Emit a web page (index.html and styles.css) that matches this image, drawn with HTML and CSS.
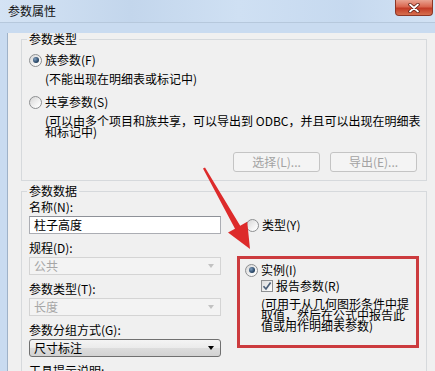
FILE: index.html
```html
<!DOCTYPE html>
<html lang="zh-CN">
<head>
<meta charset="utf-8">
<title>参数属性</title>
<link rel="stylesheet" href="styles.css">
</head>
<body>
<div class="window">
  <div class="titlebar">
    <span class="title">参数属性</span>
    <div class="close">
      <svg width="14" height="10" viewBox="0 0 14 10"><path d="M3 1.5 L11 8.5 M11 1.5 L3 8.5" stroke="#5a1c12" stroke-width="3.4" stroke-linecap="round"/><path d="M3 1.5 L11 8.5 M11 1.5 L3 8.5" stroke="#ffffff" stroke-width="1.8" stroke-linecap="round"/></svg>
    </div>
  </div>
  <div class="client">
    <fieldset class="group g1">
      <legend>参数类型</legend>
      <div class="opt first"><span class="radio on"></span>族参数(F)</div>
      <div class="note n1">(不能出现在明细表或标记中)</div>
      <div class="opt o2"><span class="radio"></span>共享参数(S)</div>
      <div class="note n2">(可以由多个项目和族共享，可以导出到 ODBC，并且可以出现在明细表<br>和标记中)</div>
      <div class="buttons">
        <button class="btn" disabled>选择(L)...</button>
        <button class="btn" disabled>导出(E)...</button>
      </div>
    </fieldset>
    <fieldset class="group g2">
      <legend>参数数据</legend>
      <div class="cols">
        <div class="left">
          <div class="lbl first">名称(N):</div>
          <div class="field input">柱子高度</div>
          <div class="lbl">规程(D):</div>
          <div class="field select disabled">公共<span class="tri"></span></div>
          <div class="lbl">参数类型(T):</div>
          <div class="field select disabled">长度<span class="tri"></span></div>
          <div class="lbl">参数分组方式(G):</div>
          <div class="field select active">尺寸标注<span class="tri"></span></div>
          <div class="lbl">工具提示说明:</div>
        </div>
        <div class="right">
          <div class="opt type"><span class="radio"></span>类型(Y)</div>
          <div class="redbox">
            <div class="opt"><span class="radio on"></span>实例(I)</div>
            <div class="opt chk"><span class="check"><svg width="10" height="10" viewBox="0 0 10 10"><path d="M1.5 5.2 L4 8 L8.6 1.6" fill="none" stroke="#4b5f78" stroke-width="1.7"/></svg></span>报告参数(R)</div>
            <div class="desc">(可用于从几何图形条件中提<br>取值，然后在公式中报告此<br>值或用作明细表参数)</div>
          </div>
        </div>
      </div>
    </fieldset>
  </div>
  <svg class="arrow" width="435" height="371" viewBox="0 0 435 371">
    <polygon points="205,167.4 240.2,225.7 247.2,221.8 250,249 228,232.6 235,228.7 203,168.6" fill="#dd2b2b"/>
  </svg>
</div>
</body>
</html>
```

FILE: styles.css
```css
* { box-sizing: border-box; }
body {
  margin: 0;
  font-family: "Noto Sans CJK SC", "Noto Sans", sans-serif;
  font-size: 12px;
  color: #000;
}
.window {
  width: 435px;
  height: 371px;
  overflow: hidden;
  position: relative;
  background: #c9dbf0;
}
.titlebar {
  height: 23px;
  display: flex;
  align-items: flex-start;
  justify-content: space-between;
  background: linear-gradient(to right, #d4e3f4 0%, #c3d6ec 30%, #cfe0f3 55%, #c6d9ef 80%, #d2e2f4 100%);
  border-bottom: 1px solid #b6c8dc;
}
.title {
  margin: 4px 0 0 8px;
  font-size: 12px;
  line-height: 14px;
  color: #111;
}
.close {
  width: 38px;
  height: 16px;
  margin-right: 2px;
  border: 1px solid #8c3626;
  border-top: none;
  border-radius: 0 0 4px 4px;
  background: linear-gradient(to bottom, #e9a391 0%, #d9664f 45%, #c23b26 55%, #d6704f 100%);
  display: flex;
  align-items: center;
  justify-content: center;
}
.client {
  margin-left: 7px;
  height: 348px;
  border-left: 1px solid #9fb2c8;
  background: #f0f0f0;
  padding-left: 13px;
}
.group {
  width: 406px;
  margin: 0;
  border: 1px solid #d6d9dc;
  min-inline-size: 0;
}
.group legend {
  padding: 0 2px;
  margin-left: -2px;
  line-height: 12px;
  height: 12px;
}
.g1 {
  margin-top: 10px;
  padding: 0 9px 8px 7px;
}
.g2 {
  margin-top: 4px;
  padding: 0 7px 20px 7px;
}
.opt {
  display: flex;
  align-items: center;
  gap: 3px;
  height: 14px;
  line-height: 14px;
  white-space: nowrap;
}
.opt.first { margin-top: 8px; }
.opt.o2 { margin-top: 10px; }
.note {
  padding-left: 16px;
  white-space: nowrap;
}
.n1 { margin-top: 6px; line-height: 12px; }
.n2 { margin-top: 6px; line-height: 11px; }
.radio {
  width: 13px;
  height: 13px;
  flex: none;
  border-radius: 50%;
  border: 1px solid #8d8f91;
  background: linear-gradient(135deg, #d6d6d6 0%, #f7f7f7 70%, #ffffff 100%);
  display: inline-grid;
  place-items: center;
}
.radio.on::after {
  content: "";
  width: 6px;
  height: 6px;
  border-radius: 50%;
  background: radial-gradient(circle at 35% 35%, #7f9dbd 0%, #2b4a6b 60%, #142636 100%);
}
.check {
  width: 12px;
  height: 12px;
  flex: none;
  border: 1px solid #8d8f91;
  background: linear-gradient(135deg, #dcdcdc, #ffffff);
  display: inline-grid;
  place-items: center;
}
.buttons {
  margin-top: 15px;
  display: flex;
  justify-content: flex-end;
  gap: 10px;
}
.btn {
  width: 87px;
  height: 20px;
  padding: 0;
  font: inherit;
  font-size: 12px;
  line-height: 18px;
  color: #a3a3a3;
  border: 1px solid #c4c4c4;
  border-radius: 3px;
  background: #f4f4f4;
}
.cols {
  display: grid;
  grid-template-columns: 192px 182px;
  column-gap: 16px;
}
.left { display: flex; flex-direction: column; }
.lbl {
  line-height: 12px;
  height: 12px;
  margin-top: 8px;
  white-space: nowrap;
}
.lbl.first { margin-top: 4px; }
.field {
  margin-top: 3px;
  height: 18px;
  line-height: 16px;
  padding-left: 4px;
  display: flex;
  align-items: center;
  justify-content: space-between;
  white-space: nowrap;
}
.input {
  background: #fff;
  border: 1px solid #abadb3;
  border-top-color: #8e9198;
}
.select { padding-right: 6px; }
.select.disabled {
  color: #a6a6a6;
  border: 1px solid #d4d4d4;
  background: #f3f3f3;
}
.select.active {
  border: 1px solid #707070;
  border-radius: 3px;
  background: linear-gradient(to bottom, #f4f4f4 0%, #ebebeb 50%, #dddddd 51%, #d2d2d2 100%);
}
.tri {
  width: 0;
  height: 0;
  border-left: 3.5px solid transparent;
  border-right: 3.5px solid transparent;
  border-top: 4px solid #000;
}
.disabled .tri { border-top-color: #c2c2c2; }
.right { display: flex; flex-direction: column; }
.opt.type { margin-top: 21px; padding-left: 9px; }
.redbox {
  margin-top: 24px;
  width: 182px;
  height: 92px;
  border: 3px solid #cc3b3e;
  padding: 4px 0 0 5px;
}
.opt.chk { margin-top: 2px; padding-left: 16px; }
.desc {
  margin-top: 5px;
  padding-left: 16px;
  line-height: 11px;
  white-space: nowrap;
}
.arrow {
  position: absolute;
  left: 0;
  top: 0;
  pointer-events: none;
}
```
